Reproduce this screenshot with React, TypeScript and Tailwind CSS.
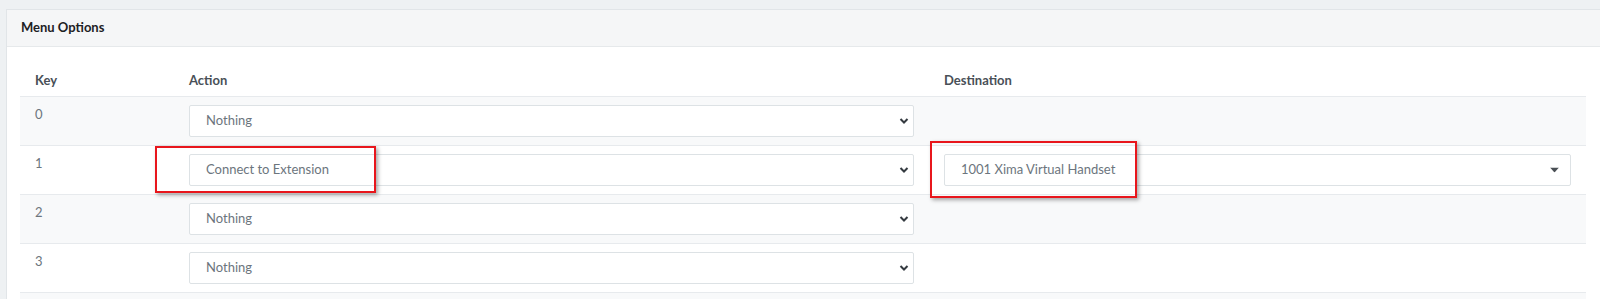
import React from 'react';

type Row = { key: string; action: string; destination?: string; highlight?: boolean };

const rows: Row[] = [
  { key: '0', action: 'Nothing' },
  { key: '1', action: 'Connect to Extension', destination: '1001 Xima Virtual Handset', highlight: true },
  { key: '2', action: 'Nothing' },
  { key: '3', action: 'Nothing' },
];

function Chevron() {
  return (
    <svg width="10" height="7" viewBox="0 0 10 7" className="absolute right-[4px] top-1/2 -translate-y-1/2">
      <path d="M1.5 1.5 L5 5 L8.5 1.5" fill="none" stroke="#343a40" strokeWidth="2" />
    </svg>
  );
}

function Caret() {
  return (
    <svg width="9" height="5" viewBox="0 0 9 5" className="absolute right-[11px] top-1/2 -translate-y-1/2">
      <path d="M0 0 L9 0 L4.5 5 Z" fill="#4a4f55" />
    </svg>
  );
}

function Select({ value, caret }: { value: string; caret?: boolean }) {
  return (
    <div className="relative h-[32px] w-full border border-[#dde2e5] bg-white rounded-[2px] flex items-center pl-[16px] text-[13px] text-[#6c757d]">
      {value}
      {caret ? <Caret /> : <Chevron />}
    </div>
  );
}

export default function App() {
  return (
    <div className="h-[299px] overflow-hidden bg-[#eef1f3] pl-[6px] pt-[9px]" style={{ fontFamily: 'Lato, "Liberation Sans", sans-serif' }}>
      <div className="w-[1610px] bg-white border border-[#e1e5e8]">
        {/* Card header */}
        <div className="h-[37px] bg-[#f5f6f7] border-b border-[#e6e9eb] flex items-center pl-[14px]">
          <span className="text-[13px] font-bold text-[#1d2124]">Menu Options</span>
        </div>

        {/* Card body */}
        <div className="pl-[13px] pt-[14px]">
          <table className="table-fixed border-collapse w-[1566px] text-[13px]">
            <colgroup>
              <col className="w-[154px]" />
              <col className="w-[755px]" />
              <col className="w-[657px]" />
            </colgroup>
            <thead>
              <tr className="h-[35px]">
                <th className="text-left align-bottom pb-[8px] pl-[15px] leading-[16px] font-bold text-[#495057]">Key</th>
                <th className="text-left align-bottom pb-[8px] pl-[15px] leading-[16px] font-bold text-[#495057]">Action</th>
                <th className="text-left align-bottom pb-[8px] pl-[15px] leading-[16px] font-bold text-[#495057]">Destination</th>
              </tr>
            </thead>
            <tbody>
              {rows.map((r, i) => (
                <tr key={r.key} className={`border-t border-[#e7eaed] ${i % 2 === 0 ? 'bg-[#f8f9fa]' : 'bg-white'}`}>
                  <td className="align-top pt-[9px] pl-[15px] leading-[16px] text-[#6c757d]">{r.key}</td>
                  <td className="relative align-top px-[15px] pt-[8px] pb-[8px]">
                    <Select value={r.action} />
                    {r.highlight && (
                      <div className="absolute left-[-19px] top-[0px] w-[221px] h-[47px] border-2 border-[#e8161c] shadow-[2px_2px_4px_rgba(0,0,0,0.35)]" />
                    )}
                  </td>
                  <td className="relative align-top px-[15px] pt-[8px] pb-[8px]">
                    {r.destination && (
                      <>
                        <Select value={r.destination} caret />
                        <div className="absolute left-[1px] top-[-5px] w-[207px] h-[57px] border-2 border-[#e8161c] shadow-[2px_2px_4px_rgba(0,0,0,0.35)]" />
                      </>
                    )}
                  </td>
                </tr>
              ))}
              {/* next striped row, cut off by the window */}
              <tr className="border-t border-[#e7eaed] bg-[#f8f9fa] h-[49px]">
                <td />
                <td />
                <td />
              </tr>
            </tbody>
          </table>
        </div>
      </div>
    </div>
  );
}
